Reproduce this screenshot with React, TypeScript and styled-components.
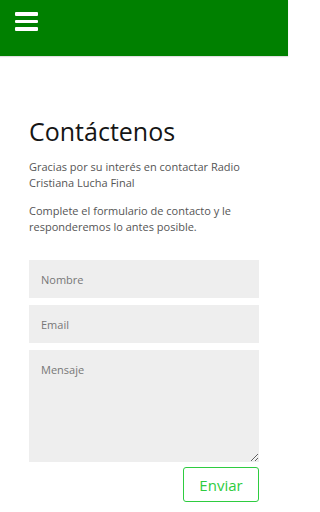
import React from 'react';
import styled, { createGlobalStyle } from 'styled-components';

const GlobalStyle = createGlobalStyle`
  html, body {
    margin: 0;
    padding: 0;
    background: #ffffff;
    font-family: "Open Sans", "Liberation Sans", sans-serif;
  }
  #root {
    width: 288px;
  }
  * {
    box-sizing: border-box;
  }
`;

const Header = styled.header`
  height: 56px;
  background-color: #008000;
  display: flex;
  align-items: flex-start;
  padding: 12px 0 0 15px;
  box-shadow: 0 1px 1px rgba(0, 0, 0, 0.12);
`;

const MenuButton = styled.button`
  background: none;
  border: none;
  padding: 0;
  width: 23px;
  display: flex;
  flex-direction: column;
  gap: 4px;
  cursor: pointer;
`;

const MenuBar = styled.span`
  display: block;
  height: 3.5px;
  width: 23px;
  background-color: #ffffff;
  border-radius: 1px;
`;

const Main = styled.main`
  padding: 57px 29px 0 29px;
`;

const Title = styled.h1`
  margin: 0 0 10px 0;
  font-size: 25px;
  font-weight: 400;
  line-height: 36px;
  color: #151515;
`;

const Text = styled.p`
  margin: 0 0 12px 0;
  font-size: 11px;
  line-height: 16px;
  color: #555;
`;

const Form = styled.form`
  margin-top: 25px;
  display: flex;
  flex-direction: column;
  gap: 7px;
`;

const Field = styled.input`
  width: 100%;
  height: 38px;
  border: none;
  background-color: #eeeeee;
  padding: 0 12px;
  font-family: inherit;
  font-size: 11px;
  color: #333;
  outline: none;

  &::placeholder {
    color: #777;
  }
`;

const MessageField = styled.textarea`
  width: 100%;
  height: 112px;
  border: none;
  background-color: #eeeeee;
  padding: 12px 12px;
  font-family: inherit;
  font-size: 11px;
  line-height: 16px;
  color: #333;
  outline: none;
  resize: vertical;
  display: block;

  &::placeholder {
    color: #777;
  }
`;

const Actions = styled.div`
  display: flex;
  justify-content: flex-end;
  margin-top: -2px;
`;

const SendButton = styled.button`
  width: 76px;
  height: 35px;
  background: #fff;
  border: 1.5px solid #2ecc40;
  border-radius: 3px;
  color: #2ecc40;
  font-family: inherit;
  font-size: 15px;
  cursor: pointer;
`;

const App: React.FC = () => {
  return (
    <>
      <GlobalStyle />
      <Header>
        <MenuButton aria-label="Menú">
          <MenuBar />
          <MenuBar />
          <MenuBar />
        </MenuButton>
      </Header>
      <Main>
        <Title>Contáctenos</Title>
        <Text>Gracias por su interés en contactar Radio Cristiana Lucha Final</Text>
        <Text>Complete el formulario de contacto y le responderemos lo antes posible.</Text>
        <Form onSubmit={e => e.preventDefault()}>
          <Field type="text" placeholder="Nombre" />
          <Field type="email" placeholder="Email" />
          <MessageField placeholder="Mensaje" />
          <Actions>
            <SendButton type="submit">Enviar</SendButton>
          </Actions>
        </Form>
      </Main>
    </>
  );
};

export default App;
